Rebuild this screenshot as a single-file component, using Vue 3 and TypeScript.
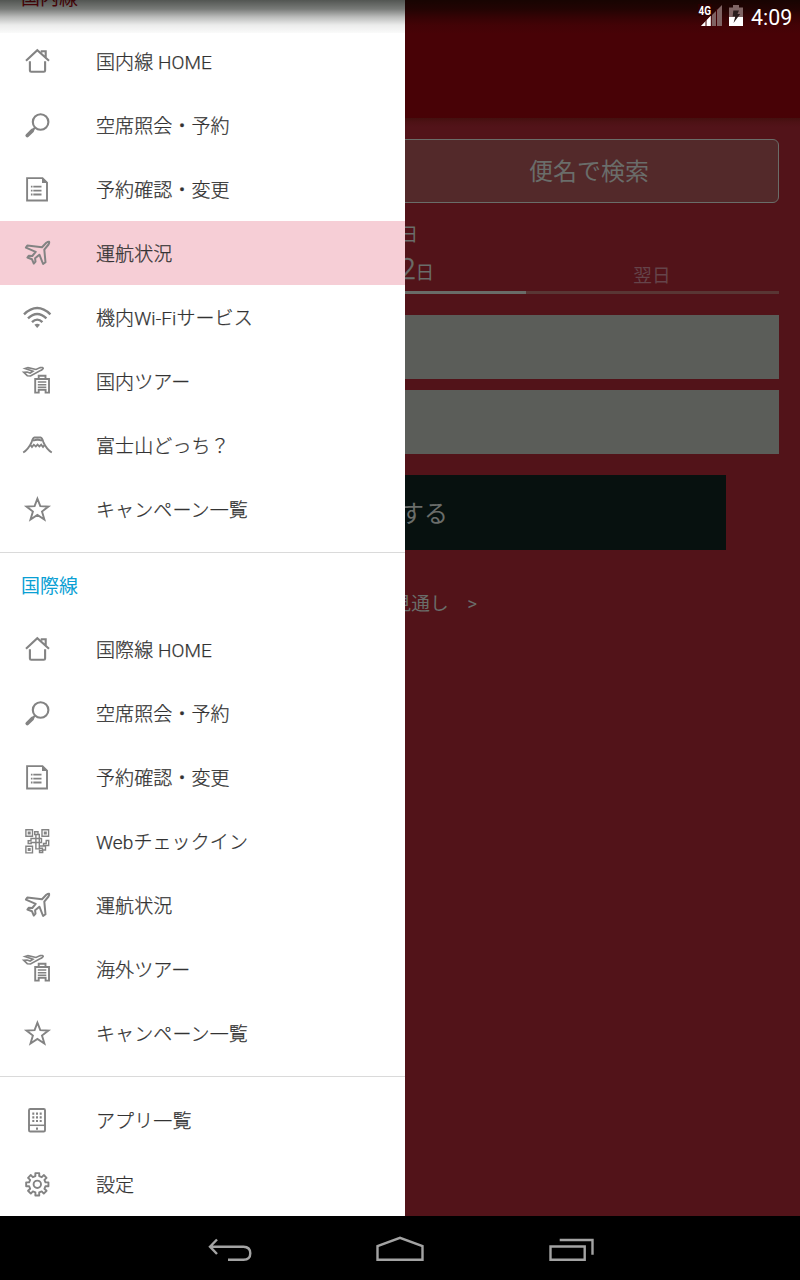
<script setup lang="ts">
interface Item {
  icon: string
  label: string
  active?: boolean
}

const domestic: Item[] = [
  { icon: 'home', label: '国内線 HOME' },
  { icon: 'search', label: '空席照会・予約' },
  { icon: 'doc', label: '予約確認・変更' },
  { icon: 'plane', label: '運航状況', active: true },
  { icon: 'wifi', label: '機内Wi-Fiサービス' },
  { icon: 'tour', label: '国内ツアー' },
  { icon: 'fuji', label: '富士山どっち？' },
  { icon: 'star', label: 'キャンペーン一覧' },
]
const international: Item[] = [
  { icon: 'home', label: '国際線 HOME' },
  { icon: 'search', label: '空席照会・予約' },
  { icon: 'doc', label: '予約確認・変更' },
  { icon: 'qr', label: 'Webチェックイン' },
  { icon: 'plane', label: '運航状況' },
  { icon: 'tour', label: '海外ツアー' },
  { icon: 'star', label: 'キャンペーン一覧' },
]
const other: Item[] = [
  { icon: 'apps', label: 'アプリ一覧' },
  { icon: 'gear', label: '設定' },
]
const sections = [
  { title: '国内線', tone: 'red', items: domestic },
  { title: '国際線', tone: 'blue', items: international },
  { title: '', tone: '', items: other },
]

// Eight-toothed gear outline around (16.3, 16.3)
function gearPath(): string {
  const pts: string[] = []
  for (let i = 0; i < 8; i++) {
    const profile: [number, number][] = [[-13, 8.4], [-10, 11.3], [10, 11.3], [13, 8.4]]
    for (const [offset, r] of profile) {
      const a = ((i * 45 + offset) * Math.PI) / 180
      pts.push(`${(16.3 + r * Math.cos(a)).toFixed(2)} ${(16.3 + r * Math.sin(a)).toFixed(2)}`)
    }
  }
  return `M${pts.join('L')}Z`
}

const icons: Record<string, string> = {
  home: '<path d="M5 15.8 16.3 5.2 28 15.8M20.8 7.500V6.300H24.700V12.500M8.900 16.300V25.500Q8.900 26.700 10.200 26.700H22.800Q24.100 26.700 24.100 25.500V16.300"/>',
  search: '<circle cx="19.600" cy="13" r="7.800"/><path d="M14 18.800 11.500 21.300"/><path d="M11.300 21.600 6.300 26.500" stroke-width="3.800" stroke-linecap="round"/>',
  doc: '<path d="M6.100 5.100H21.500L26 9.600V27.500H6.100Z" stroke-width="1.900"/><path d="M21 5V10H26.500Z" fill="#838383" stroke="none"/><path d="M9.900 13.700H11.500M12.300 13.700H20.500M9.900 17.600H11.500M12.300 17.600H20.500M9.900 21.500H11.500M12.300 21.500H20.500" stroke-width="1.800"/>',
  plane: '<path d="M21 10.200 25.300 5.700Q27 4.500 28.100 4.700 28.500 6 27.500 7.500L23.300 12.700 24.500 25.300 22.100 27 18.400 17.700 14.100 21.300 14.500 24.700 12.800 26.600 11 22.300 6.400 20.500 7.700 18.800 11.300 19 14.700 14.800 4.900 10.600 6.300 8.500Z" stroke-width="2" stroke-linejoin="round"/>',
  wifi: '<path d="M3 13.400Q16.200 .800 29.400 13.400M7 17.400Q16.200 8.500 25.400 17.400M11 21.200Q16.200 16 21.400 21.200" stroke-width="2.400"/><path d="M13.400 23.700Q16.200 22 19 23.700L16.200 27Z" fill="#838383" stroke="none"/>',
  tour: '<path d="M2.600 7.200 6 7 9.200 8 12 6.200 4 3.600 7 2.600 15 4.500 19.300 2.600Q22 2.100 22.200 3.500 21 5.200 18.500 6L9.500 11 6.300 10.700Z" stroke-width="1.600"/><path d="M14.200 14H28V27.600H24.600V24.700H17.700V27.600H14.200ZM17.700 13.500V10.700H24.500V13.500" stroke-width="1.900"/><path d="M16.800 17H25.300M16.800 19.700H25.300M16.800 22.300H25.300" stroke-width="1.500"/>',
  fuji: '<path d="M2.200 23.500Q7.200 20.500 10.500 13.500 11.800 8.800 13.500 8.500H19.500Q21.200 8.800 22.500 13.500 25.800 20.500 30.800 23.500M12 11.800Q16.500 9.700 21 11.800M9.500 15.900 11 18 12.800 15.700 14.800 17.500 16.500 15.600 18.400 17.500 20.200 15.700 22 18 23.500 15.900" stroke-width="1.800"/>',
  star: '<path d="M16.400 5.700 19.300 13.200 27.400 13.600 21 18.500 23.400 26.500 16.400 21.900 9.500 26.500 11.900 18.500 5.500 13.600 13.600 13.200Z" stroke-width="1.900"/>',
  qr: '<path d="M4.900 4.700H11.500V11.300H4.900ZM21 4.700H27.600V11.300H21ZM4.900 21.300H11.500V27.900H4.900ZM7.400 7.200H9V8.800H7.400ZM23.500 7.200H25.100V8.800H23.500ZM7.400 23.800H9V25.400H7.400ZM13.700 6.700H17V9.500H13.700ZM17 9.500H18.300V23.900H14.900V9.500M7.200 17.700V15.700H10V13.500H20.500V17.500H10.200V18.500H7.200ZM25.200 15.500H27.700V20.500H22.500V18.500H25.200ZM18.500 21H24.500V25H21.700V27.500H18.500V25.500H21.500V23.200H18.500" stroke-width="1.400"/>',
  apps: '<rect x="8" y="5" width="16" height="22.500" rx="1.300" stroke-width="1.900"/><path d="M8 21.300H24" stroke-width="1.500"/><path d="M11.300 9.700H13.300M15 9.700H17M18.700 9.700H20.700M11.300 13.300H13.300M15 13.300H17M18.700 13.300H20.700M11.300 17H13.300M15 17H17M18.700 17H20.700M15 24.600H17" stroke-width="2.200"/>',
  gear: `<path d="${gearPath()}" stroke-width="1.900" stroke-linejoin="round"/><circle cx="16.300" cy="16.300" r="3.700" stroke-width="1.900"/>`,
}
</script>

<template>
  <div class="screen">
    <div class="page">
      <header class="toolbar"></header>
      <main class="content">
        <div class="mode">便名で検索</div>
        <div class="tabs">
          <div class="tab"></div>
          <div class="tab on">
            <span class="day">当日</span>
            <span class="date"><b>1</b>月<b>2</b>日</span>
          </div>
          <div class="tab"><span class="next">翌日</span></div>
        </div>
        <div class="field"></div>
        <div class="field"></div>
        <div class="submit">検索する</div>
        <div class="link">運航の見通し　&gt;</div>
      </main>
    </div>

    <aside class="drawer">
      <section v-for="(s, i) in sections" :key="i" class="section">
        <h2 v-if="s.title" :class="s.tone">{{ s.title }}</h2>
        <div v-for="it in s.items" :key="it.label" class="row" :class="{ active: it.active }">
          <svg class="icon" viewBox="0 0 32 32" v-html="icons[it.icon]"></svg>
          <span class="label">{{ it.label }}</span>
        </div>
      </section>
    </aside>

    <div class="status">
      <svg class="signal" width="24" height="24" viewBox="0 0 24 24">
        <path d="M24 1V22H3Z" fill="#7f6262" />
        <path d="M13 11.500V22H3Z" fill="#fff" />
        <path d="M8 16V22M13.300 11V22M18.500 5V22" stroke="#430003" stroke-width="1" />
        <rect x="0" y="0" width="13.800" height="12" fill="#2b0001" />
        <text x="0.500" y="11" textLength="12.500" lengthAdjust="spacingAndGlyphs">4G</text>
      </svg>
      <svg class="battery" width="14" height="22" viewBox="0 0 14 22">
        <path d="M4 0H10V2.500H14V12H0V2.500H4Z" fill="#806565" />
        <path d="M0 12H14V21H0Z" fill="#fff" />
        <path d="M4.300 5.500H10L8.500 9H11.200L4.500 18 6.300 11.500H3.700Z" fill="#291d1d" />
      </svg>
      <span class="time">4:09</span>
    </div>

    <nav class="navbar">
      <svg width="60" height="64" viewBox="0 0 60 64">
        <path d="M17 23.500 10 30.700 17 38M10 30.700H43.500Q50.300 31 50.300 37.200 50.300 43.500 43.500 43.700H28" />
      </svg>
      <svg width="60" height="64" viewBox="0 0 60 64">
        <path d="M7.500 43.700V30L30 21.900 52.500 30V43.700Z" />
      </svg>
      <svg width="60" height="64" viewBox="0 0 60 64">
        <path d="M10.500 30.500H44.700V43.700H10.500ZM19.700 24H52.500V38.700" />
      </svg>
    </nav>
  </div>
</template>

<style>
body {
  margin: 0;
}
</style>

<style scoped>
.screen {
  position: relative;
  width: 800px;
  height: 1280px;
  overflow: hidden;
  background: #521319;
  font-family: Roboto, 'Noto Sans CJK JP', sans-serif;
  font-size: 18.67px;
  color: #333;
}
.page {
  height: 1216px;
}
.toolbar {
  height: 118px;
  background: #480206;
}
.content {
  display: flex;
  flex-direction: column;
  padding: 21px 21px 0;
  background: linear-gradient(#43100f, #4d1115 4px, #521319 9px);
  color: #6a6d6a;
}
.mode {
  box-sizing: border-box;
  height: 64px;
  padding-left: 378px;
  border: 1px solid #6a6d69;
  border-radius: 6px;
  background: #53292a;
  font-size: 24px;
  line-height: 65px;
  text-align: center;
}
.tabs {
  display: grid;
  grid-template-columns: 252px 253px 253px;
  height: 91px;
  margin-bottom: 21px;
}
.tab {
  box-sizing: border-box;
  display: flex;
  flex-direction: column;
  justify-content: flex-end;
  align-items: center;
  border-bottom: 3px solid #593634;
}
.tab.on {
  border-color: #696c68;
}
.day {
  margin-bottom: 3px;
  line-height: 28px;
}
.date {
  line-height: 34px;
  margin-bottom: 1px;
}
.date b {
  font-size: 29px;
  font-weight: 300;
  -webkit-text-stroke: 0.5px;
}
.next {
  line-height: 28px;
  margin-bottom: 1px;
  margin-right: 1px;
  color: #65444a;
}
.field {
  height: 64px;
  margin-bottom: 11px;
  background: #5b5d59;
}
.submit {
  width: 652px;
  height: 75px;
  margin: 10px auto 0;
  background: #07110f;
  font-size: 24px;
  line-height: 78px;
  text-align: center;
}
.link {
  width: 456px;
  margin-top: 40px;
  line-height: 28px;
  text-align: right;
}
.drawer {
  position: absolute;
  left: 0;
  top: 0;
  width: 405px;
  height: 1216px;
  overflow: hidden;
  background: #fff;
  font-weight: 300;
}
.section {
  padding-bottom: 11px;
}
.section:first-child {
  margin-top: -35px;
}
.section + .section {
  border-top: 1px solid #dadada;
}
.section:last-child {
  padding-top: 11px;
}
h2 {
  box-sizing: border-box;
  height: 64px;
  margin: 0;
  padding: 2px 0 0 21px;
  font-size: 19px;
  font-weight: 400;
  line-height: 64px;
}
.red {
  color: #b00010;
}
.blue {
  color: #0a9fd4;
}
.row {
  display: flex;
  align-items: center;
  height: 64px;
  padding-left: 21px;
  white-space: nowrap;
}
.row.active {
  background: #f6ced6;
}
.icon {
  width: 32px;
  height: 32px;
  margin-right: 43px;
  fill: none;
  stroke: #838383;
  stroke-width: 2.1;
}
.label {
  padding-bottom: 2px;
  font-size: 19px;
  letter-spacing: 0.1px;
  -webkit-text-stroke: 0.25px;
}
.status {
  position: absolute;
  left: 0;
  right: 0;
  top: 0;
  height: 33px;
  display: flex;
  justify-content: flex-end;
  background: linear-gradient(rgba(0, 5, 0, 0.68), rgba(0, 5, 0, 0.53) 9px, rgba(0, 5, 0, 0.27) 17px, rgba(0, 10, 0, 0.08) 25px, rgba(0, 20, 0, 0.02));
}
.signal {
  margin: 4px 7px 0 0;
}
.signal text {
  font: 700 12.5px Roboto, sans-serif;
  fill: #fff;
}
.battery {
  margin: 5px 8px 0 0;
}
.time {
  width: 49px;
  color: #fff;
  font-size: 21.33px;
  line-height: 35px;
}
.navbar {
  display: grid;
  grid-template-columns: repeat(3, 170px);
  justify-content: center;
  justify-items: center;
  height: 64px;
  background: #000;
}
.navbar path {
  fill: none;
  stroke: #a3a3a3;
  stroke-width: 2.4;
}
</style>
